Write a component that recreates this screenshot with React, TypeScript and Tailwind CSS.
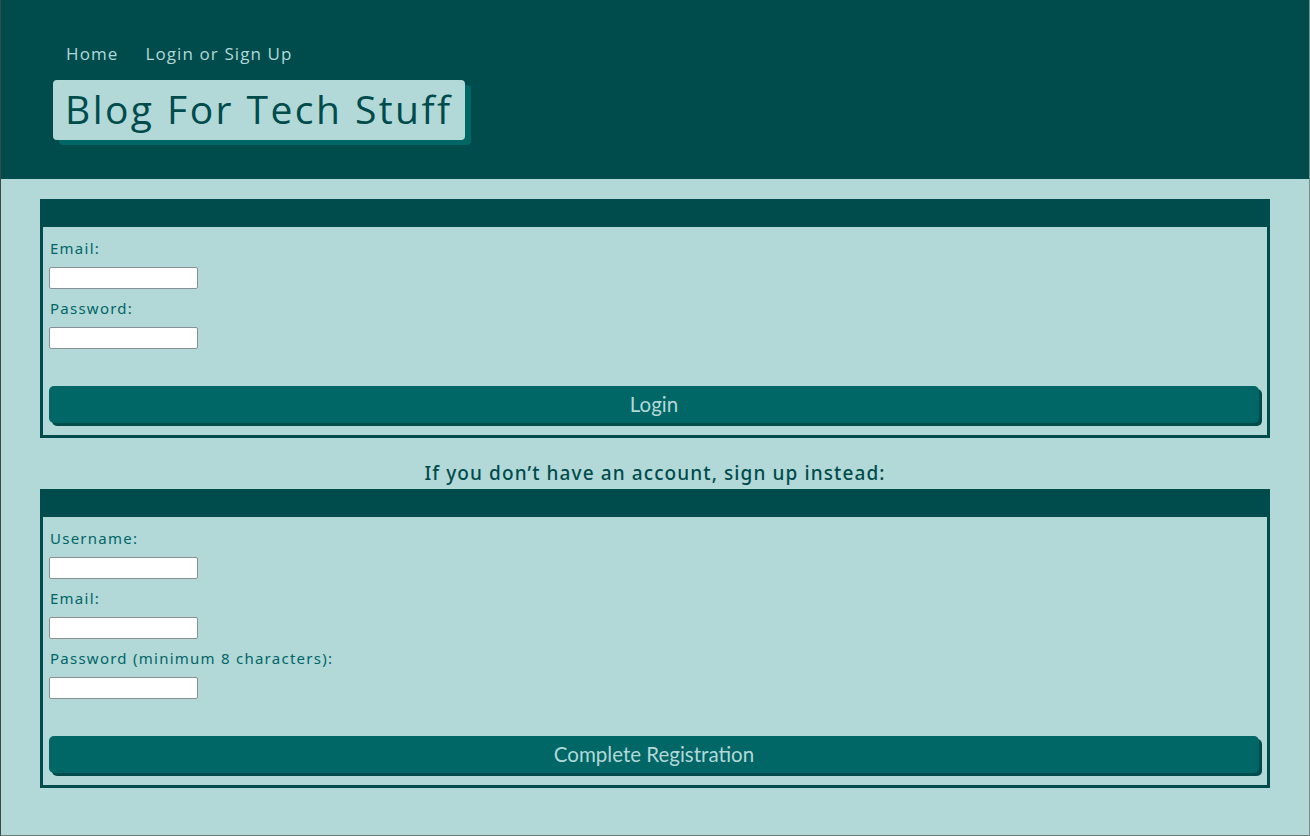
import React from 'react';

const labelCls = 'block text-[15px] leading-5 tracking-[1.25px] text-[#006666] font-["Noto_Sans",sans-serif]';
const inputCls = 'block w-[149px] h-[22px] bg-white border border-[#8a8f96] rounded-[2px]';

function Field({label}: {label: string}) {
	return (
		<div>
			<label className={`${labelCls} pl-px`}>{label}</label>
			<input type="text" className={`${inputCls} mt-[9px] mb-[9px]`}/>
		</div>
	);
}

function FormCard({fields, button}: {fields: string[]; button: string}) {
	return (
		<div className="border-x-[3px] border-b-[3px] border-[#004c4c]">
			<div className="h-[28px] bg-[#004c4c]"/>
			<form className="pl-[6px] pr-[9px] pt-[11px] pb-[12px]" onSubmit={(e) => e.preventDefault()}>
				{fields.map((f) => (
					<Field key={f} label={f}/>
				))}
				<button
					type="submit"
					className='mt-[28px] w-[1210px] h-[37px] bg-[#006666] rounded-[5px] shadow-[3px_3px_0_#004c4c] text-[20.5px] text-[#b2d8d8] font-["Lato",sans-serif]'>
					{button}
				</button>
			</form>
		</div>
	);
}

export default function App() {
	return (
		<div className="min-h-[836px] bg-[#b2d8d8] border-l border-l-[#3f4747] border-r border-r-[#7f8a8a] border-b border-b-[#6e7a7a]">
			<header className="h-[179px] bg-[#004c4c] pt-[41px] pl-[52px]">
				<nav className='flex gap-[27px] pl-[13px] text-[17px] tracking-[1.1px] text-[#b2d8d8] font-["Open_Sans",sans-serif]'>
					<a href="#">Home</a>
					<a href="#">Login or Sign Up</a>
				</nav>
				<div className="mt-[13px] inline-block">
					<h1 className='h-[60px] px-[12px] flex items-center bg-[#b2d8d8] rounded-[4px] shadow-[6px_5px_0_#006666] text-[39px] tracking-[2.45px] text-[#004c4c] font-["Open_Sans",sans-serif]'>
						Blog For Tech Stuff
					</h1>
				</div>
			</header>

			<main className="px-[39px] pt-[20px] pb-[47px]">
				<FormCard fields={['Email:', 'Password:']} button="Login"/>
				<h2 className='mt-[20px] text-center text-[19px] leading-[31px] font-medium tracking-[1.1px] text-[#004c4c] font-["Noto_Sans",sans-serif]'>
					If you don’t have an account, sign up instead:
				</h2>
				<FormCard fields={['Username:', 'Email:', 'Password (minimum 8 characters):']} button="Complete Registration"/>
			</main>
		</div>
	);
}
